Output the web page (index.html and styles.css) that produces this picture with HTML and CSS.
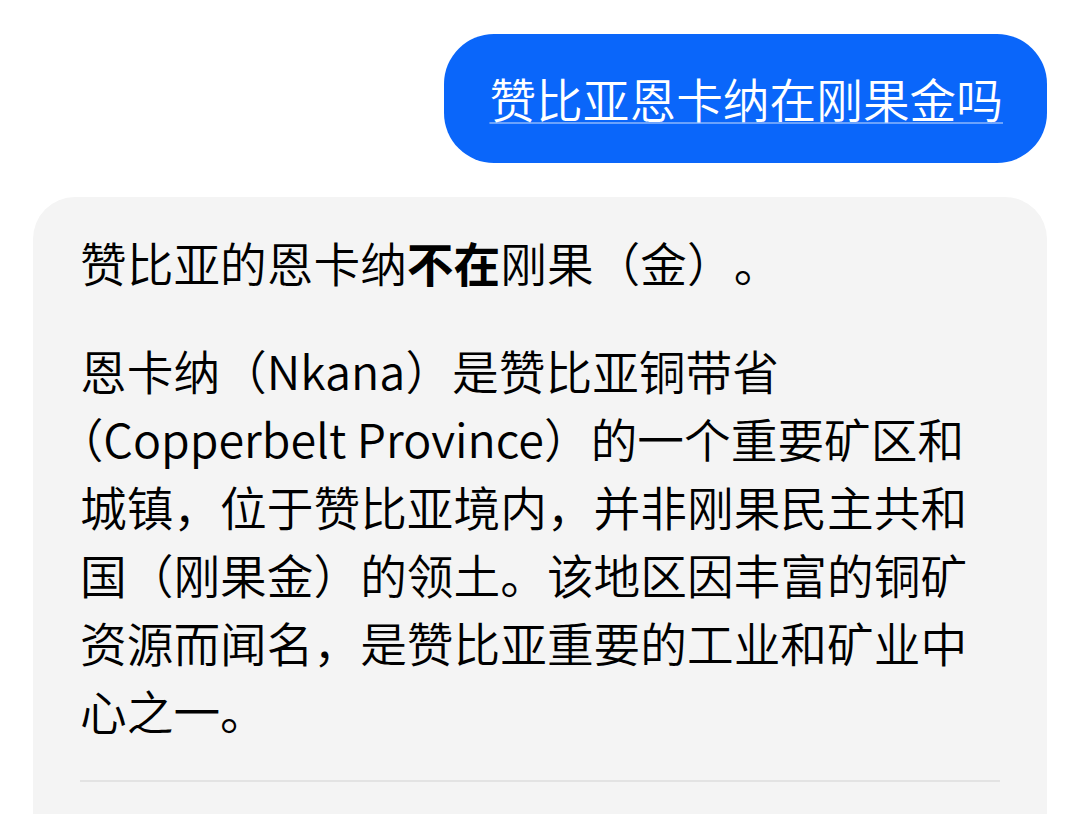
FILE: index.html
```html
<!DOCTYPE html>
<html lang="zh-CN">
<head>
<meta charset="utf-8">
<link rel="stylesheet" href="styles.css">
</head>
<body>
<div class="chat">
  <div class="row-user">
    <div class="bubble"><span class="q">赞比亚恩卡纳在刚果金吗</span></div>
  </div>
  <div class="card">
    <p class="para">赞比亚的恩卡纳<b>不在</b>刚果（金）。</p>
    <p class="para trim">恩卡纳（Nkana）是赞比亚铜带省（Copperbelt Province）的一个重要矿区和城镇，位于赞比亚境内，并非刚果民主共和国（刚果金）的领土。该地区因丰富的铜矿资源而闻名，是赞比亚重要的工业和矿业中心之一。</p>
    <div class="divider"></div>
  </div>
</div>
</body>
</html>
```
FILE: styles.css
```css
html, body {
  margin: 0;
  padding: 0;
  background: #ffffff;
}
body {
  font-family: "Noto Sans CJK SC", "Noto Sans", sans-serif;
  color: #000;
  overflow: hidden;
  height: 814px;
  text-spacing-trim: space-all;
}
.chat {
  height: 814px;
  box-sizing: border-box;
  padding: 34px 33px 0 33px;
  display: flex;
  flex-direction: column;
  gap: 34px;
}
.row-user {
  display: flex;
  justify-content: flex-end;
}
.bubble {
  background: #0a66fa;
  color: #fff;
  border-radius: 50px;
  padding: 30px 44px 31px 45px;
  font-size: 46.7px;
  line-height: 68px;
  font-weight: 350;
}
.q {
  text-decoration: underline;
  text-decoration-color: rgba(255, 255, 255, 0.4);
  text-decoration-thickness: 2px;
  text-underline-offset: 4px;
}
.card {
  flex: 1;
  background: #f4f4f4;
  border-radius: 42px 42px 0 0;
  padding: 31px 47px 0 47px;
  overflow: hidden;
}
.para {
  margin: 0 0 40px 0;
  font-size: 46.7px;
  line-height: 68px;
  font-weight: 350;
}
.para.trim {
  text-spacing-trim: trim-start;
  margin-bottom: 36px;
}
.para b {
  font-weight: 700;
}
.divider {
  height: 2px;
  background: #e3e3e3;
}
```
